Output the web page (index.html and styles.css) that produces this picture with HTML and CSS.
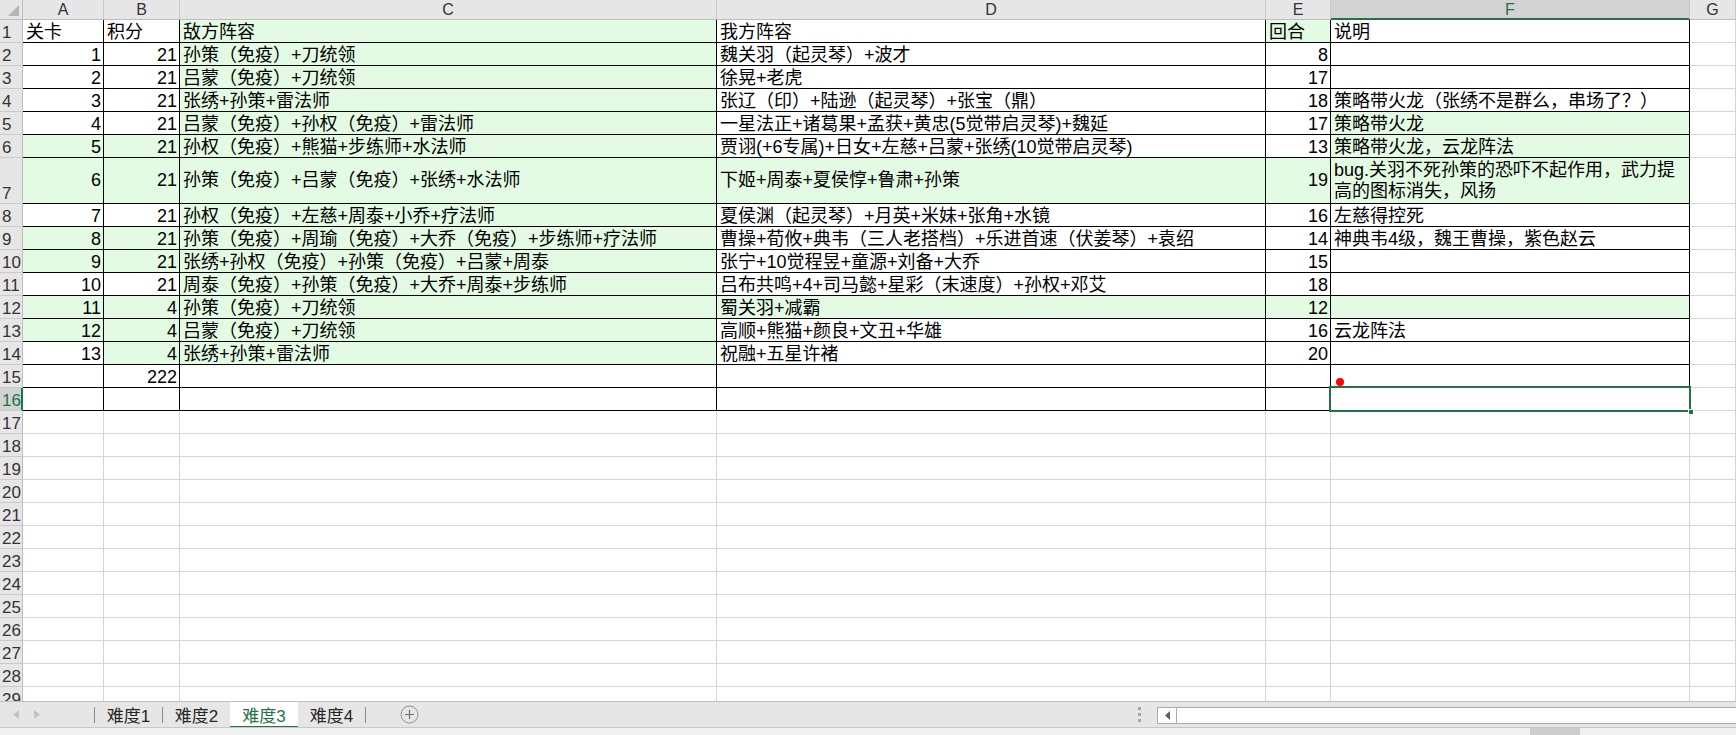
FILE: index.html
```html
<!DOCTYPE html>
<html lang="zh">
<head>
<meta charset="utf-8">
<title>难度3</title>
<link rel="stylesheet" href="styles.css">
</head>
<body>
<div class="app">
  <div class="sheet">
    <div class="row hdr">
      <div class="corner"><svg width="22" height="19" viewBox="0 0 22 19"><polygon points="8,16 19,16 19,5" fill="#b5b5b5"/></svg></div>
      <div>A</div><div>B</div><div>C</div><div>D</div><div>E</div><div class="on">F</div><div>G</div>
    </div>
    <div class="row">
      <div class="rh">1</div>
      <div class="c">关卡</div><div class="c">积分</div><div class="c g">敌方阵容</div><div class="c">我方阵容</div><div class="c g">回合</div><div class="c">说明</div><div></div>
    </div>
    <div class="row">
      <div class="rh">2</div>
      <div class="c n">1</div><div class="c n">21</div><div class="c g">孙策（免疫）+刀统领</div><div class="c">魏关羽（起灵琴）+波才</div><div class="c n">8</div><div class="c"></div><div></div>
    </div>
    <div class="row">
      <div class="rh">3</div>
      <div class="c n">2</div><div class="c n">21</div><div class="c g">吕蒙（免疫）+刀统领</div><div class="c">徐晃+老虎</div><div class="c n">17</div><div class="c"></div><div></div>
    </div>
    <div class="row">
      <div class="rh">4</div>
      <div class="c n">3</div><div class="c n">21</div><div class="c g">张绣+孙策+雷法师</div><div class="c">张辽（印）+陆逊（起灵琴）+张宝（鼎）</div><div class="c n">18</div><div class="c">策略带火龙（张绣不是群么，串场了？）</div><div></div>
    </div>
    <div class="row">
      <div class="rh">5</div>
      <div class="c n">4</div><div class="c n">21</div><div class="c g">吕蒙（免疫）+孙权（免疫）+雷法师</div><div class="c">一星法正+诸葛果+孟获+黄忠(5觉带启灵琴)+魏延</div><div class="c n">17</div><div class="c g">策略带火龙</div><div></div>
    </div>
    <div class="row">
      <div class="rh">6</div>
      <div class="c n g">5</div><div class="c n g">21</div><div class="c g">孙权（免疫）+熊猫+步练师+水法师</div><div class="c">贾诩(+6专属)+日女+左慈+吕蒙+张绣(10觉带启灵琴)</div><div class="c n">13</div><div class="c g">策略带火龙，云龙阵法</div><div></div>
    </div>
    <div class="row tall">
      <div class="rh">7</div>
      <div class="c n g">6</div><div class="c n g">21</div><div class="c g">孙策（免疫）+吕蒙（免疫）+张绣+水法师</div><div class="c g">下姬+周泰+夏侯惇+鲁肃+孙策</div><div class="c n g">19</div><div class="c g wrap">bug.关羽不死孙策的恐吓不起作用，武力提<br>高的图标消失，风扬</div><div></div>
    </div>
    <div class="row">
      <div class="rh">8</div>
      <div class="c n">7</div><div class="c n">21</div><div class="c g">孙权（免疫）+左慈+周泰+小乔+疗法师</div><div class="c">夏侯渊（起灵琴）+月英+米妹+张角+水镜</div><div class="c n">16</div><div class="c">左慈得控死</div><div></div>
    </div>
    <div class="row">
      <div class="rh">9</div>
      <div class="c n g">8</div><div class="c n g">21</div><div class="c g">孙策（免疫）+周瑜（免疫）+大乔（免疫）+步练师+疗法师</div><div class="c">曹操+荀攸+典韦（三人老搭档）+乐进首速（伏姜琴）+袁绍</div><div class="c n">14</div><div class="c">神典韦4级，魏王曹操，紫色赵云</div><div></div>
    </div>
    <div class="row">
      <div class="rh">10</div>
      <div class="c n g">9</div><div class="c n g">21</div><div class="c g">张绣+孙权（免疫）+孙策（免疫）+吕蒙+周泰</div><div class="c">张宁+10觉程昱+童源+刘备+大乔</div><div class="c n">15</div><div class="c"></div><div></div>
    </div>
    <div class="row">
      <div class="rh">11</div>
      <div class="c n">10</div><div class="c n">21</div><div class="c g">周泰（免疫）+孙策（免疫）+大乔+周泰+步练师</div><div class="c">吕布共鸣+4+司马懿+星彩（末速度）+孙权+邓艾</div><div class="c n">18</div><div class="c"></div><div></div>
    </div>
    <div class="row">
      <div class="rh">12</div>
      <div class="c n g">11</div><div class="c n g">4</div><div class="c g">孙策（免疫）+刀统领</div><div class="c g">蜀关羽+减霸</div><div class="c n g">12</div><div class="c g"></div><div></div>
    </div>
    <div class="row">
      <div class="rh">13</div>
      <div class="c n g">12</div><div class="c n g">4</div><div class="c g">吕蒙（免疫）+刀统领</div><div class="c">高顺+熊猫+颜良+文丑+华雄</div><div class="c n">16</div><div class="c">云龙阵法</div><div></div>
    </div>
    <div class="row">
      <div class="rh">14</div>
      <div class="c n">13</div><div class="c n g">4</div><div class="c g">张绣+孙策+雷法师</div><div class="c">祝融+五星许褚</div><div class="c n">20</div><div class="c"></div><div></div>
    </div>
    <div class="row">
      <div class="rh">15</div>
      <div class="c n"></div><div class="c n">222</div><div class="c"></div><div class="c"></div><div class="c"></div><div class="c note"><span class="dot"></span></div><div></div>
    </div>
    <div class="row">
      <div class="rh on">16</div>
      <div class="c"></div><div class="c"></div><div class="c"></div><div class="c"></div><div class="c"></div><div class="c active"><span class="sel"></span><span class="handle"></span></div><div></div>
    </div>
    <div class="row"><div class="rh">17</div><div></div><div></div><div></div><div></div><div></div><div></div><div></div></div>
    <div class="row"><div class="rh">18</div><div></div><div></div><div></div><div></div><div></div><div></div><div></div></div>
    <div class="row"><div class="rh">19</div><div></div><div></div><div></div><div></div><div></div><div></div><div></div></div>
    <div class="row"><div class="rh">20</div><div></div><div></div><div></div><div></div><div></div><div></div><div></div></div>
    <div class="row"><div class="rh">21</div><div></div><div></div><div></div><div></div><div></div><div></div><div></div></div>
    <div class="row"><div class="rh">22</div><div></div><div></div><div></div><div></div><div></div><div></div><div></div></div>
    <div class="row"><div class="rh">23</div><div></div><div></div><div></div><div></div><div></div><div></div><div></div></div>
    <div class="row"><div class="rh">24</div><div></div><div></div><div></div><div></div><div></div><div></div><div></div></div>
    <div class="row"><div class="rh">25</div><div></div><div></div><div></div><div></div><div></div><div></div><div></div></div>
    <div class="row"><div class="rh">26</div><div></div><div></div><div></div><div></div><div></div><div></div><div></div></div>
    <div class="row"><div class="rh">27</div><div></div><div></div><div></div><div></div><div></div><div></div><div></div></div>
    <div class="row"><div class="rh">28</div><div></div><div></div><div></div><div></div><div></div><div></div><div></div></div>
    <div class="row"><div class="rh">29</div><div></div><div></div><div></div><div></div><div></div><div></div><div></div></div>
  </div>

  <div class="tabbar">
    <div class="nav">
      <svg width="6" height="9" viewBox="0 0 6 9"><polygon points="6,0 6,9 0,4.5" fill="#c3c3c3"/></svg>
      <svg width="6" height="9" viewBox="0 0 6 9"><polygon points="0,0 0,9 6,4.5" fill="#c3c3c3"/></svg>
    </div>
    <span class="sep"></span>
    <div class="tab">难度1</div>
    <span class="sep"></span>
    <div class="tab">难度2</div>
    <div class="tab current">难度3</div>
    <div class="tab">难度4</div>
    <span class="sep"></span>
    <div class="add"><svg width="19" height="19" viewBox="0 0 19 19"><circle cx="9.5" cy="9.5" r="8.5" fill="none" stroke="#8f8f8f" stroke-width="1"/><path d="M9.5 5v9M5 9.5h9" stroke="#707070" stroke-width="1.2"/></svg></div>
    <div class="spacer"></div>
    <div class="grip"><i></i><i></i><i></i></div>
    <div class="hscroll">
      <div class="hbtn"><svg width="5" height="9" viewBox="0 0 5 9"><polygon points="5,0 5,9 0,4.5" fill="#606060"/></svg></div>
      <div class="htrack"></div>
    </div>
  </div>
  <div class="status"><span class="thumb"></span></div>
</div>
</body>
</html>
```

FILE: styles.css
```css
* { box-sizing: border-box; margin: 0; padding: 0; }
html, body { width: 1736px; height: 735px; overflow: hidden; background: #fff; }
body {
  font-family: "Liberation Sans Narrow", "Liberation Sans", "Noto Sans CJK SC", sans-serif;
  color: #000;
}
.app { display: flex; flex-direction: column; width: 1736px; height: 735px; }

.sheet { height: 701px; overflow: hidden; flex: none; }
.row {
  display: grid;
  grid-template-columns: 23px 81px 76px 537px 549px 65px 359px 46px;
  height: 23px;
}
.row.hdr { height: 20px; }
.row.tall { height: 46px; }

.row > div {
  border-right: 1px solid #d6d6d6;
  border-bottom: 1px solid #d6d6d6;
  display: flex;
  align-items: flex-end;
  padding: 0 3px;
  font-size: 18px;
  line-height: 19px;
  white-space: nowrap;
  overflow: hidden;
}
.row > .c { border-right-color: #000; border-bottom-color: #000; }
.row > .g { background: #e3fbe3; }
.row > .n { justify-content: flex-end; padding-right: 2px; }
.row.tall > .c { align-items: center; }
.row > .wrap { white-space: normal; line-height: 21px; }

.hdr > div {
  background: #e6e6e6;
  border-right-color: #cacaca;
  border-bottom-color: #bdbdbd;
  justify-content: center;
  align-items: center;
  font-family: "Liberation Sans", sans-serif;
  font-size: 16px;
  color: #333;
}
.hdr > .corner { padding: 0; align-items: stretch; justify-content: flex-start; border-right-color: #bdbdbd; }
.hdr > .on {
  background: #d2d2d2;
  color: #217346;
  border-bottom: 2px solid #217346;
}

.row > .rh {
  background: #e6e6e6;
  border-right-color: #bdbdbd;
  border-bottom-color: #cacaca;
  padding: 0 0 0 2px;
  font-size: 17px;
  color: #333;
}
.row > .rh.on {
  background: #d2d2d2;
  color: #217346;
  border-right: 2px solid #217346;
}

.row > .note { position: relative; overflow: visible; }
.dot {
  position: absolute;
  left: 5px;
  top: 13px;
  width: 8px;
  height: 8px;
  border-radius: 50%;
  background: #f00;
}
.row > .active { position: relative; overflow: visible; }
.sel {
  position: absolute;
  left: -2px;
  top: -2px;
  right: -2px;
  bottom: -2px;
  border: 2px solid #217346;
  z-index: 2;
}
.handle {
  position: absolute;
  right: -5px;
  bottom: -5px;
  width: 6px;
  height: 6px;
  background: #217346;
  border: 1px solid #fff;
  z-index: 3;
}

/* sheet tab bar */
.tabbar {
  height: 26px;
  flex: none;
  background: #e6e6e6;
  border-top: 1px solid #bfbfbf;
  display: flex;
  align-items: stretch;
  font-family: "Liberation Sans Narrow", "Liberation Sans", "Noto Sans CJK SC", sans-serif;
  font-size: 17px;
}
.nav { width: 94px; display: flex; align-items: center; gap: 15px; padding-left: 13px; }
.sep { width: 1px; height: 16px; background: #8c8c8c; align-self: center; flex: none; }
.tab {
  width: 67px;
  display: flex;
  align-items: center;
  justify-content: center;
  color: #262626;
}
.tab.current {
  width: 68px;
  background: #fff;
  color: #217346;
  border-bottom: 2px solid #217346;
  margin-bottom: -1px;
}
.add { width: 69px; display: flex; align-items: center; justify-content: flex-end; padding-right: 16px; }
.spacer { flex: 1; }
.grip { width: 22px; display: flex; flex-direction: column; justify-content: center; gap: 3px; padding-left: 3px; }
.grip i { display: block; width: 3px; height: 3px; background: #a6a6a6; }
.hscroll {
  width: 579px;
  margin: 5px 0 3px;
  display: flex;
  border: 1px solid #ababab;
  border-right: none;
  background: #fff;
}
.hbtn { width: 19px; border-right: 1px solid #ababab; display: flex; align-items: center; justify-content: center; }
.htrack { flex: 1; }

.status {
  flex: 1;
  background: #f0f0f0;
  border-top: 1px solid #c8c8c8;
  display: flex;
  padding-left: 1530px;
}
.thumb { width: 50px; background: #cdcdcd; }
```
